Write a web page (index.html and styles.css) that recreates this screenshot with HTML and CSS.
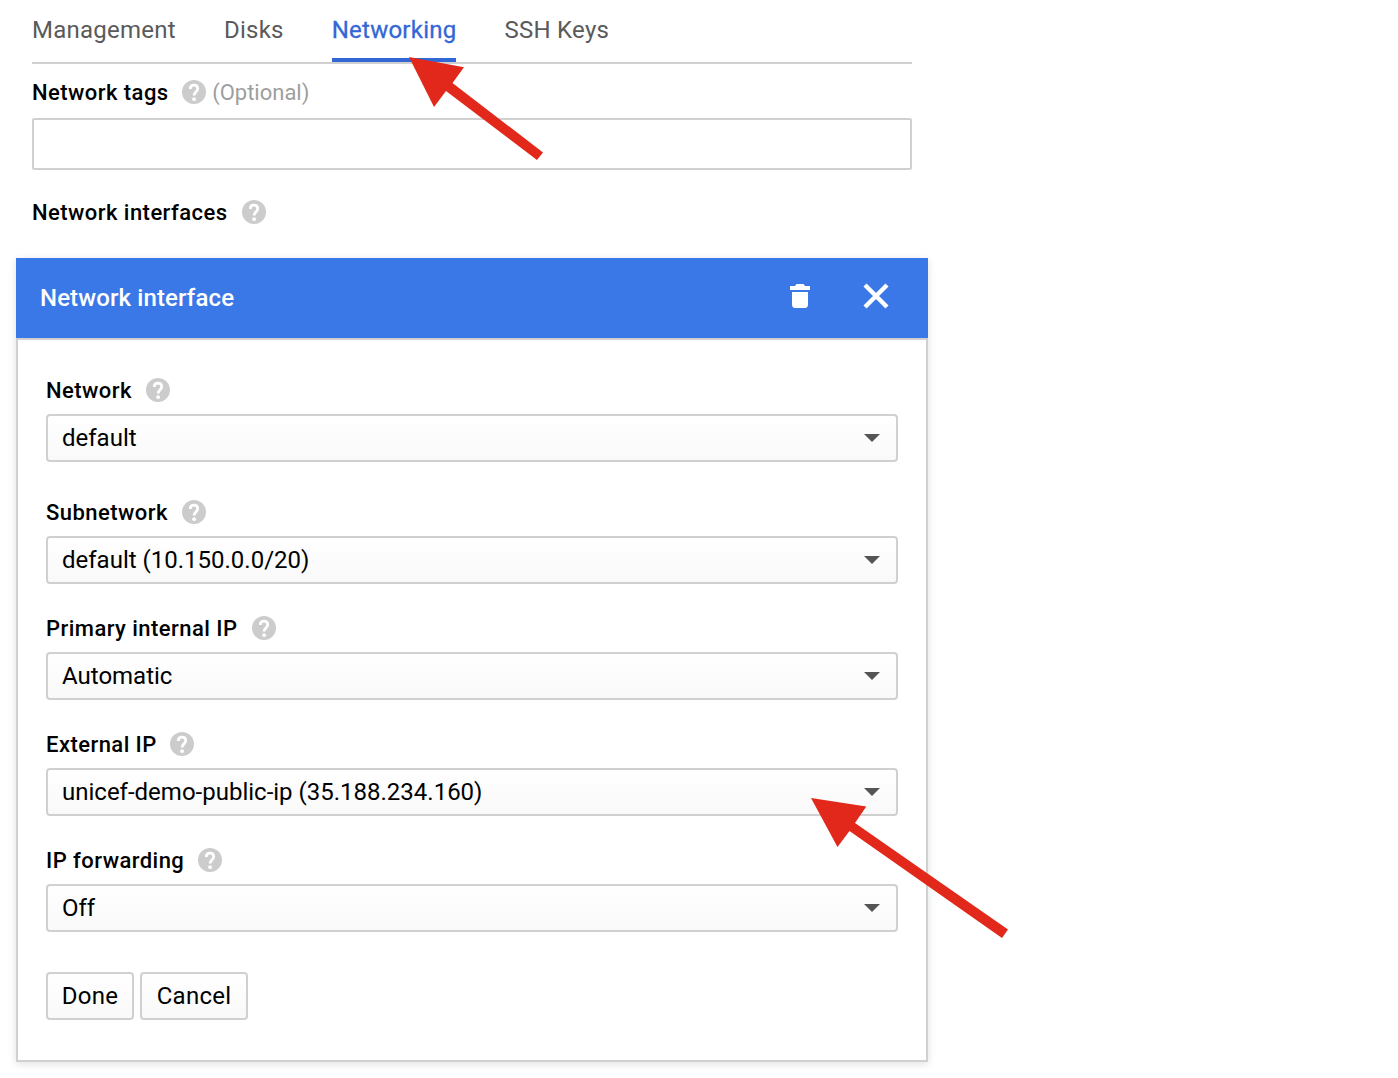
FILE: index.html
```html
<!DOCTYPE html>
<html lang="en">
<head>
<meta charset="utf-8">
<title>Networking</title>
<link rel="stylesheet" href="styles.css">
</head>
<body>
<svg class="defs" width="0" height="0" aria-hidden="true">
  <symbol id="help" viewBox="0 0 24 24"><circle cx="12" cy="12" r="12" fill="#ccc"/><path d="M8.300 8.900C8.300 6.600 9.800 5.200 12 5.200s3.700 1.500 3.700 3.600c0 2.900-3.600 3.300-3.600 6.800" fill="none" stroke="#fff" stroke-width="2.800"/><circle cx="12.100" cy="19.200" r="1.900" fill="#fff"/></symbol>
</svg>
<main class="page">
  <nav class="tabs">
    <a class="tab">Management</a>
    <a class="tab">Disks</a>
    <a class="tab active">Networking</a>
    <a class="tab">SSH Keys</a>
  </nav>
  <section class="tags">
    <div class="label"><span>Network tags</span><svg class="help snug"><use href="#help"/></svg><span class="optional">(Optional)</span></div>
    <input class="text-input" type="text" aria-label="Network tags">
    <div class="label interfaces"><span>Network interfaces</span><svg class="help"><use href="#help"/></svg></div>
  </section>
  <section class="card">
    <header class="card-header">
      <h2 class="title">Network interface</h2>
      <svg class="trash" viewBox="0 0 20 24"><path fill="#fff" d="M0 2h5l1.500-2h7L15 2h5v4H0zM2 8h16v12.500a3.500 3.500 0 0 1-3.500 3.500h-9A3.500 3.500 0 0 1 2 20.500z"/></svg>
      <svg class="close" viewBox="0 0 26 26"><path stroke="#fff" stroke-width="4.400" d="M2 2l22 22M24 2L2 24"/></svg>
    </header>
    <div class="card-body">
      <div class="field first"><div class="label"><span>Network</span><svg class="help"><use href="#help"/></svg></div><div class="select"><span>default</span><i class="caret"></i></div></div>
      <div class="field"><div class="label"><span>Subnetwork</span><svg class="help"><use href="#help"/></svg></div><div class="select"><span>default (10.150.0.0/20)</span><i class="caret"></i></div></div>
      <div class="field"><div class="label"><span>Primary internal IP</span><svg class="help wide"><use href="#help"/></svg></div><div class="select"><span>Automatic</span><i class="caret"></i></div></div>
      <div class="field"><div class="label"><span>External IP</span><svg class="help snug"><use href="#help"/></svg></div><div class="select"><span>unicef-demo-public-ip (35.188.234.160)</span><i class="caret"></i></div></div>
      <div class="field"><div class="label"><span>IP forwarding</span><svg class="help"><use href="#help"/></svg></div><div class="select"><span>Off</span><i class="caret"></i></div></div>
      <div class="actions"><button class="button done">Done</button><button class="button cancel">Cancel</button></div>
    </div>
  </section>
</main>
<svg class="arrows" viewBox="0 0 1398 1078" aria-hidden="true">
  <path d="M409 57L464 67.300 452.500 83 543 152.500 537 160 446 91 434 107z"/>
  <path d="M811 798L866.300 806.500 855 823 1008 929.500 1002 938 849.500 831 837.500 847z"/>
</svg>
</body>
</html>
```
FILE: styles.css
```css
* { box-sizing: border-box; }
body { margin: 0; background: #fff; color: #000; font: 24px/28px Roboto, "Liberation Sans", sans-serif; position: relative; height: 1078px; overflow: hidden; }
.defs { display: block; }
.page { width: 944px; padding: 0 16px; }
.tabs { display: flex; gap: 48px; margin: 0 16px; height: 64px; border-bottom: 2px solid #d0d0d0; color: #5a5a5a; letter-spacing: .25px; }
.tab { padding-top: 16px; height: 62px; }
.tab.active { color: #3367d6; border-bottom: 4px solid #3367d6; -webkit-text-stroke: .3px #3367d6; }
.tags { margin: 16px 16px 34px; }
.label { display: flex; align-items: center; height: 24px; font-size: 22px; line-height: 24px; font-weight: 500; letter-spacing: .45px; }
.label span { padding-top: 2px; }
.help { flex: none; width: 24px; height: 24px; margin-left: 14px; }
.help.snug { margin-left: 13.500px; }
.help.wide { margin-left: 14.700px; }
.label .optional { margin-left: 6px; color: #9e9e9e; font-weight: 400; letter-spacing: 0; }
.text-input { display: block; width: 100%; height: 52px; margin: 14px 0 30px; border: 2px solid #d0d0d0; border-radius: 2px; background: #fff; }
.card { box-shadow: 0 2px 8px rgba(0, 0, 0, .12); }
.card-header { display: flex; align-items: center; height: 80px; padding: 0 39px 4px 24px; background: #3b78e7; color: #fff; }
.title { margin: 0 auto 0 0; padding-top: 3px; font-size: 24px; line-height: 28px; font-weight: 500; letter-spacing: .12px; }
.trash { width: 20px; height: 24px; margin-right: 53px; }
.close { width: 26px; height: 26px; }
.card-body { height: 724px; padding: 38px 28px 0; border: 2px solid #d0d0d0; background: #fff; }
.field { margin-bottom: 32px; }
.field.first { margin-bottom: 38px; }
.select { display: flex; align-items: center; justify-content: space-between; height: 48px; margin-top: 12px; padding: 0 16px 0 14px; border: 2px solid #d0d0d0; border-radius: 4px; background: linear-gradient(#fff, #f9f9f9); }
.caret { border: 8px solid transparent; border-top-color: #555; border-bottom: 0; }
.actions { display: flex; gap: 6px; padding-top: 8px; }
.button { height: 48px; padding: 0; border: 2px solid #d0d0d0; border-radius: 4px; background: linear-gradient(#fff, #f9f9f9); color: #000; font: inherit; letter-spacing: .25px; }
.done { width: 88px; }
.cancel { width: 108px; }
.arrows { position: absolute; left: 0; top: 0; width: 1398px; height: 1078px; fill: #e2281a; pointer-events: none; }
```
